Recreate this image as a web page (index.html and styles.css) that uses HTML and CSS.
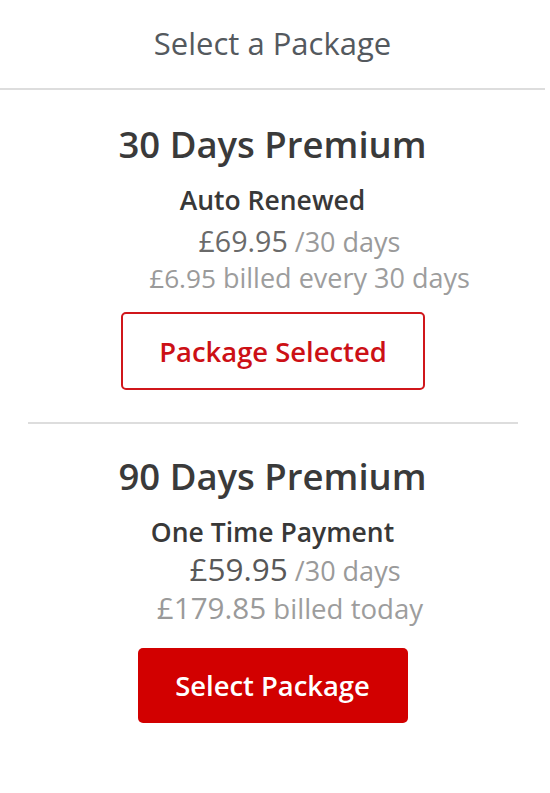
FILE: index.html
```html
<!DOCTYPE html>
<html lang="en">
<head>
<meta charset="utf-8">
<title>Select a Package</title>
<link rel="stylesheet" href="styles.css">
</head>
<body>
<div class="page">
  <header class="top">Select a Package</header>

  <section class="pkg pkg-first">
    <h2 class="pkg-title">30 Days Premium</h2>
    <p class="pkg-type">Auto Renewed</p>
    <p class="pkg-price price-a"><span class="amount">£69.95</span> <span class="per">/30 days</span></p>
    <p class="pkg-billed billed-a"><span class="amount-sm">£6.95</span> billed every 30 days</p>
    <button class="btn btn-outline" type="button">Package Selected</button>
  </section>

  <hr class="sep">

  <section class="pkg pkg-second">
    <h2 class="pkg-title">90 Days Premium</h2>
    <p class="pkg-type">One Time Payment</p>
    <p class="pkg-price price-b"><span class="amount">£59.95</span> <span class="per">/30 days</span></p>
    <p class="pkg-billed billed-b"><span class="amount-sm">£179.85</span> billed today</p>
    <button class="btn btn-solid" type="button">Select Package</button>
  </section>
</div>
</body>
</html>
```

FILE: styles.css
```css
* { box-sizing: border-box; }

html, body {
  margin: 0;
  padding: 0;
  background: #ffffff;
}

body {
  font-family: "Open Sans", "Noto Sans", sans-serif;
  color: #333333;
}

.page {
  width: 545px;
}

.top {
  height: 90px;
  display: flex;
  align-items: center;
  justify-content: center;
  font-size: 31px;
  font-weight: 400;
  color: #54595e;
  border-bottom: 2px solid #dddddd;
  padding-bottom: 2px;
}

.pkg {
  display: flex;
  flex-direction: column;
  align-items: center;
  text-align: center;
}

.pkg-first { padding-top: 32px; }
.pkg-second { padding-top: 30px; }

.pkg-title {
  margin: 0;
  font-size: 36.5px;
  line-height: 44px;
  font-weight: 600;
  color: #3a3a3a;
}

.pkg-type {
  margin: 18px 0 0;
  font-size: 26.5px;
  line-height: 32px;
  font-weight: 600;
  color: #383838;
}

.pkg-price {
  margin: 8px 0 0;
  font-size: 27px;
  line-height: 36px;
  color: #9a9a9a;
}

.pkg-price .amount {
  font-size: 28.6px;
  line-height: 1;
  color: #6a6a6a;
}

.pkg-price .per {
  color: #9a9a9a;
}

.price-a { padding-left: 54px; }

.price-b {
  margin-top: 5px;
  padding-left: 45px;
}

.price-b .amount {
  font-size: 31.5px;
  color: #585858;
}

.pkg-billed {
  margin: 1px 0 0;
  font-size: 27px;
  line-height: 34px;
  color: #9d9d9d;
}

.pkg-billed .amount-sm {
  font-size: 26.2px;
  line-height: 1;
  color: #9a9a9a;
}

.billed-a { padding-left: 74px; }

.billed-b {
  margin-top: 2px;
  padding-left: 35px;
  font-size: 27.6px;
}

.billed-b .amount-sm {
  font-size: 29.6px;
}

.btn {
  display: flex;
  align-items: center;
  justify-content: center;
  font-family: "Open Sans", "Noto Sans", sans-serif;
  font-size: 27.4px;
  font-weight: 600;
  border-radius: 5px;
  margin-top: 17px;
  cursor: pointer;
}

.btn-outline {
  width: 304px;
  height: 78px;
  background: #ffffff;
  border: 2px solid #d0161b;
  color: #cc1016;
  margin-left: 1px;
}

.btn-solid {
  width: 270px;
  height: 75px;
  background: #d20000;
  border: none;
  color: #ffffff;
  margin-top: 23px;
}

.sep {
  margin: 32px 0 0 28px;
  width: 490px;
  height: 2px;
  border: none;
  background: #dddddd;
}
```
